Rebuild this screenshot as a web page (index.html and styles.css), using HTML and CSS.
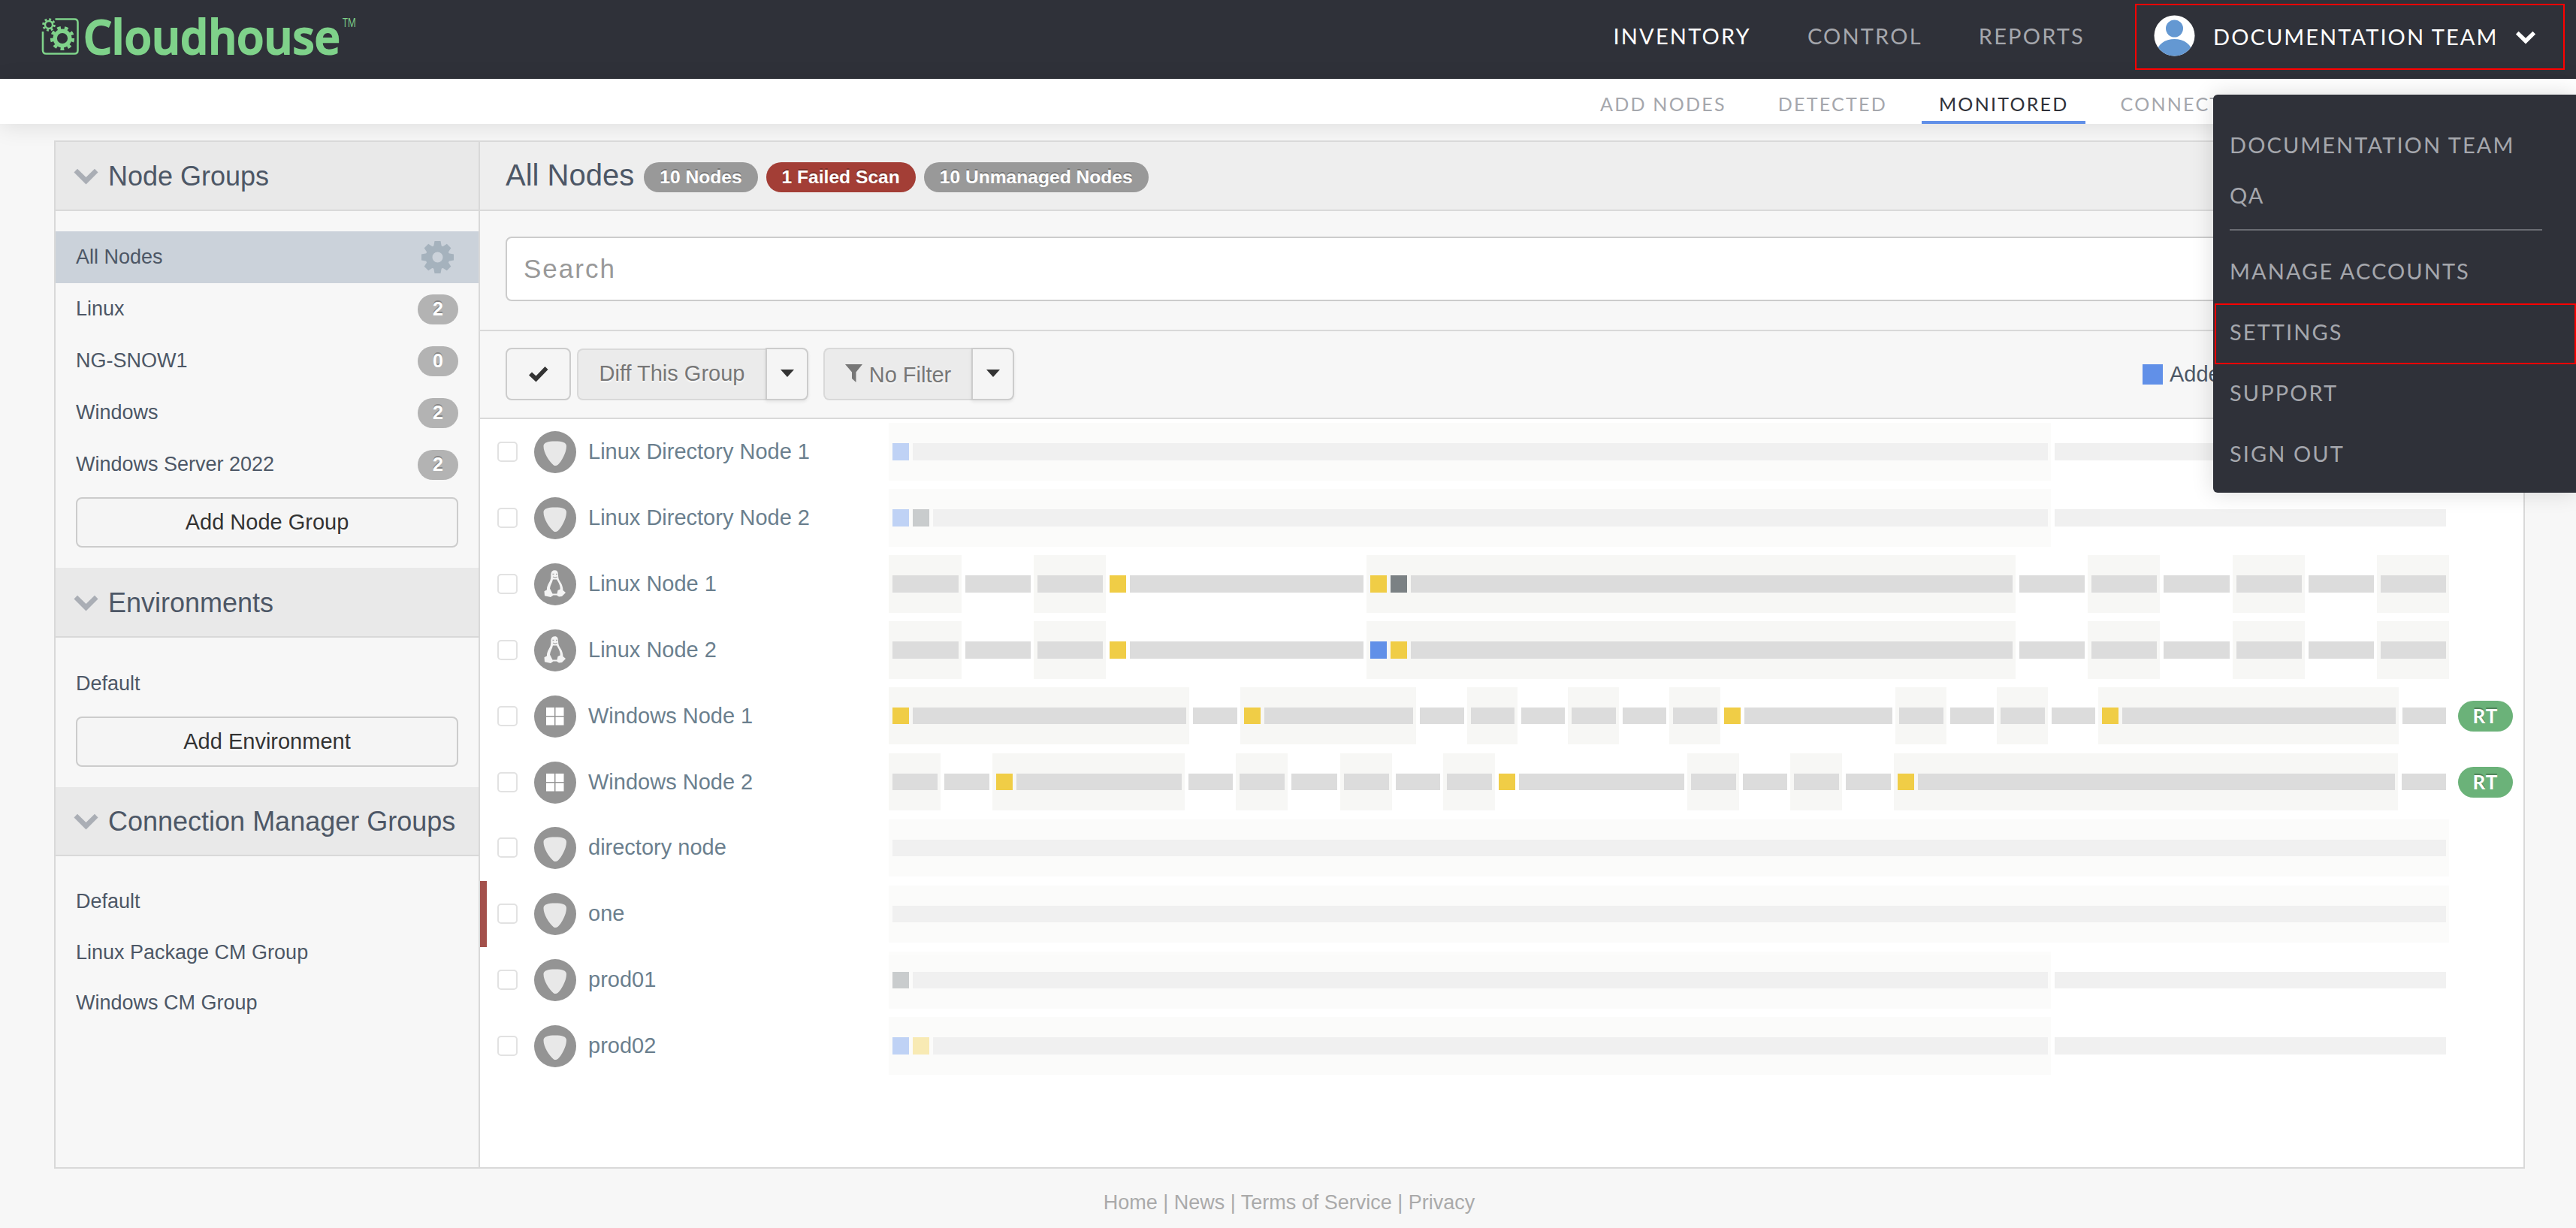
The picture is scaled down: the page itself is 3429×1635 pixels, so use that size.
FILE: index.html
```html
<!DOCTYPE html>
<html lang="en">
<head>
<meta charset="utf-8">
<title>Cloudhouse - Monitored Nodes</title>
<link rel="stylesheet" href="styles.css">
</head>
<body>
<svg class="defs" aria-hidden="true">
  <symbol id="chevron" viewBox="0 0 33 22"><path d="M0.5 5.500 5 .8 16.500 12 28 .8 32.500 5.500 16.500 21.500z"/></symbol>
  <symbol id="directory" viewBox="0 0 56 56"><circle cx="28" cy="28" r="28" fill="#949494"/><path d="M12.500 20c0-5 6-6.500 15.500-6.500S43 15 43 20c0 9-7 21-11 24.500-2.500 2-5 2-7 0C20 40 12.500 29 12.500 20z" fill="#e8e8e8"/></symbol>
  <symbol id="linux" viewBox="0 0 56 56"><circle cx="28" cy="28" r="28" fill="#949494"/><path d="M27.500 9.300c-4 0-5.300 3-5.200 7 .2 4.500-1 7-3 10.500-1.700 3-2.600 6-2.300 8.500l-3.500 2 .5 6 8 1.700 3.500-2.500h4.500l3 2 4-.5 5-5-3.500-3c-.2-4-1.200-7.500-3.200-10.500-2.400-3.600-3.300-6-3.300-9.700 0-4-1-6.500-4.500-6.500z" fill="#f4f4f4"/><path d="M25 21.500h5c2.500 4 5 8 4.700 13l-3.200 1.500-1 4.500h-6l-3.500-7c.5-4.500 3-7.500 4-12z" fill="#949494"/><path d="M24.500 14.500h2M29 14.500h2M25 18l3 1 3-1" stroke="#aaa" stroke-width="1.300" fill="none"/></symbol>
  <symbol id="windows" viewBox="0 0 56 56"><circle cx="28" cy="28" r="28" fill="#949494"/><path d="M16 16h11v11H16zM28.500 16h11v11h-11zM16 28.500h11v11H16zM28.500 28.500h11v11h-11z" fill="#fff"/></symbol>
</svg>

<header class="topbar">
  <svg class="logo" width="424" height="64" viewBox="0 0 424 64">
    <g fill="none" stroke="#7fd28a">
      <path d="M17.500 1.500H43q4.500 0 4.500 4.500v37q0 4.500-4.500 4.500H5.500q-4.500 0-4.500-4.500V18" stroke-width="2.600"/>
      <circle cx="9" cy="9" r="5" stroke-width="2.400"/>
      <circle cx="9" cy="9" r="7.300" stroke-width="3" stroke-dasharray="2.800 2.933"/>
      <circle cx="27" cy="27" r="9.800" stroke-width="5.400"/>
      <circle cx="27" cy="27" r="14" stroke-width="4.200" stroke-dasharray="4.800 4.974"/>
    </g>
    <g fill="#7fd28a">
      <text class="logo-name" x="55" y="48" textLength="342" lengthAdjust="spacingAndGlyphs">Cloudhouse</text>
      <text class="logo-tm" x="400" y="11.500" textLength="18" lengthAdjust="spacingAndGlyphs">TM</text>
    </g>
  </svg>
  <nav class="main-nav">
    <a class="active">INVENTORY</a><a>CONTROL</a><a>REPORTS</a>
  </nav>
  <div class="account">
    <svg width="55" height="55" viewBox="0 0 55 55"><clipPath id="av"><circle cx="27.500" cy="27.500" r="27"/></clipPath><g clip-path="url(#av)"><path fill="#fff" d="M0 0h55v55H0z"/><circle cx="27.500" cy="18" r="11.500" fill="#6498d2"/><ellipse cx="27.500" cy="49" rx="23" ry="17" fill="#6498d2"/></g></svg>
    <span>DOCUMENTATION TEAM</span>
    <svg class="account-chevron" width="28" height="18"><use href="#chevron"/></svg>
  </div>
</header>

<nav class="sub-nav">
  <a>ADD NODES</a><a>DETECTED</a><a class="active">MONITORED</a><a>CONNECTION MANAGERS</a>
</nav>

<div class="menu">
  <a class="account-name">DOCUMENTATION TEAM</a>
  <a class="account-name">QA</a>
  <hr>
  <a>MANAGE ACCOUNTS</a>
  <a class="marked">SETTINGS</a>
  <a>SUPPORT</a>
  <a>SIGN OUT</a>
</div>

<div class="panel">
  <aside class="sidebar">
    <h2><svg width="33" height="22"><use href="#chevron"/></svg>Node Groups</h2>
    <ul class="groups">
      <li class="selected">All Nodes
        <svg width="43" height="43" viewBox="0 0 43 43"><circle cx="21.500" cy="21.500" r="11.500" fill="none" stroke="#a5b2bd" stroke-width="9"/><path d="M17.500 0h8l1.500 8h-11zM17.500 43h8l1.500-8h-11zM0 17.500v8l8 1.500V16zM43 17.500v8L35 27V16zM3.700 9.200l5.500-5.500 7 4.500-8 8zM39.300 9.200l-5.500-5.500-7 4.500 8 8zM3.700 33.800l5.500 5.500 7-4.500-8-8zM39.300 33.800l-5.500 5.500-7-4.500 8-8z" fill="#a5b2bd"/></svg>
      </li>
      <li>Linux<b>2</b></li>
      <li>NG-SNOW1<b>0</b></li>
      <li>Windows<b>2</b></li>
      <li>Windows Server 2022<b>2</b></li>
    </ul>
    <button class="wide">Add Node Group</button>
    <h2 class="environments"><svg width="33" height="22"><use href="#chevron"/></svg>Environments</h2>
    <ul><li>Default</li></ul>
    <button class="wide">Add Environment</button>
    <h2><svg width="33" height="22"><use href="#chevron"/></svg>Connection Manager Groups</h2>
    <ul class="managers"><li>Default</li><li>Linux Package CM Group</li><li>Windows CM Group</li></ul>
  </aside>

  <main class="content">
    <div class="title">
      <h1>All Nodes</h1>
      <b>10 Nodes</b><b class="failed">1 Failed Scan</b><b>10 Unmanaged Nodes</b>
    </div>
    <div class="search"><input type="text" placeholder="Search"></div>
    <div class="toolbar">
      <button class="check"><svg width="26" height="21" viewBox="0 0 26 21"><path d="M0 11.500 4 7.500 9.500 12.500 21.500 0 25.500 4 9.500 20.500z" fill="#333"/></svg></button>
      <span class="split diff"><button class="main">Diff This Group</button><button class="caret"><i></i></button></span>
      <span class="split filter"><button class="main"><svg width="23" height="24" viewBox="0 0 23 24"><path d="M0 0h23L14.500 10.500V24L9 19V10.500z" fill="#777"/></svg>No Filter</button><button class="caret"><i></i></button></span>
      <span class="legend"><i></i>Added</span>
    </div>

    <div class="nodes">
      <div class="node"><input type="checkbox"><svg class="os"><use href="#directory"/></svg><a>Linux Directory Node 1</a>
        <div class="timeline faded"><div style="width:1547px"><i class="added"></i><i></i></div><div style="width:530px"><i></i></div></div></div>
      <div class="node"><input type="checkbox"><svg class="os"><use href="#directory"/></svg><a>Linux Directory Node 2</a>
        <div class="timeline faded"><div style="width:1547px"><i class="added"></i><i class="removed"></i><i></i></div><div style="width:530px"><i></i></div></div></div>
      <div class="node"><input type="checkbox"><svg class="os"><use href="#linux"/></svg><a>Linux Node 1</a>
        <div class="timeline"><div style="width:97px"><i></i></div><div style="width:96px"><i></i></div><div style="width:96px"><i></i></div><div style="width:347px"><i class="changed"></i><i></i></div><div style="width:864px"><i class="changed"></i><i class="removed"></i><i></i></div><div style="width:96px"><i></i></div><div style="width:96px"><i></i></div><div style="width:97px"><i></i></div><div style="width:96px"><i></i></div><div style="width:96px"><i></i></div><div style="width:96px"><i></i></div></div></div>
      <div class="node"><input type="checkbox"><svg class="os"><use href="#linux"/></svg><a>Linux Node 2</a>
        <div class="timeline"><div style="width:97px"><i></i></div><div style="width:96px"><i></i></div><div style="width:96px"><i></i></div><div style="width:347px"><i class="changed"></i><i></i></div><div style="width:864px"><i class="added"></i><i class="changed"></i><i></i></div><div style="width:96px"><i></i></div><div style="width:96px"><i></i></div><div style="width:97px"><i></i></div><div style="width:96px"><i></i></div><div style="width:96px"><i></i></div><div style="width:96px"><i></i></div></div></div>
      <div class="node"><input type="checkbox"><svg class="os"><use href="#windows"/></svg><a>Windows Node 1</a>
        <div class="timeline"><div style="width:400px"><i class="changed"></i><i></i></div><div style="width:68px"><i></i></div><div style="width:234px"><i class="changed"></i><i></i></div><div style="width:68px"><i></i></div><div style="width:67px"><i></i></div><div style="width:67px"><i></i></div><div style="width:68px"><i></i></div><div style="width:67px"><i></i></div><div style="width:68px"><i></i></div><div style="width:233px"><i class="changed"></i><i></i></div><div style="width:68px"><i></i></div><div style="width:67px"><i></i></div><div style="width:68px"><i></i></div><div style="width:67px"><i></i></div><div style="width:400px"><i class="changed"></i><i></i></div><div style="width:67px"><i></i></div></div><b>RT</b></div>
      <div class="node"><input type="checkbox"><svg class="os"><use href="#windows"/></svg><a>Windows Node 2</a>
        <div class="timeline"><div style="width:69px"><i></i></div><div style="width:69px"><i></i></div><div style="width:256px"><i class="changed"></i><i></i></div><div style="width:68px"><i></i></div><div style="width:69px"><i></i></div><div style="width:70px"><i></i></div><div style="width:69px"><i></i></div><div style="width:68px"><i></i></div><div style="width:69px"><i></i></div><div style="width:256px"><i class="changed"></i><i></i></div><div style="width:69px"><i></i></div><div style="width:68px"><i></i></div><div style="width:69px"><i></i></div><div style="width:69px"><i></i></div><div style="width:671px"><i class="changed"></i><i></i></div><div style="width:68px"><i></i></div></div><b>RT</b></div>
      <div class="node"><input type="checkbox"><svg class="os"><use href="#directory"/></svg><a>directory node</a>
        <div class="timeline faded"><div style="width:2077px"><i></i></div></div></div>
      <div class="node failing"><input type="checkbox"><svg class="os"><use href="#directory"/></svg><a>one</a>
        <div class="timeline faded"><div style="width:2077px"><i></i></div></div></div>
      <div class="node"><input type="checkbox"><svg class="os"><use href="#directory"/></svg><a>prod01</a>
        <div class="timeline faded"><div style="width:1547px"><i class="removed"></i><i></i></div><div style="width:530px"><i></i></div></div></div>
      <div class="node"><input type="checkbox"><svg class="os"><use href="#directory"/></svg><a>prod02</a>
        <div class="timeline faded"><div style="width:1547px"><i class="added"></i><i class="changed"></i><i></i></div><div style="width:530px"><i></i></div></div></div>
    </div>
  </main>
</div>

<footer><a>Home</a> | <a>News</a> | <a>Terms of Service</a> | <a>Privacy</a></footer>
</body>
</html>
```
FILE: styles.css
```css
* { box-sizing: border-box; }
body { margin: 0; width: 3429px; height: 1635px; overflow: hidden; position: relative; background: #f7f7f7; color: #4d5766; font: 27px "Liberation Sans", Arial, sans-serif; white-space: nowrap; }
h1, h2, ul { margin: 0; padding: 0; font-weight: normal; list-style: none; }
button { font: 29px/1 "Liberation Sans", Arial, sans-serif; color: #333; background: #f5f5f5; border: 2px solid #ccc; border-radius: 8px; padding: 0; text-shadow: 0 2px 2px rgba(255,255,255,.75); }
svg { display: block; flex: none; }
.defs { position: absolute; width: 0; height: 0; }

.topbar { height: 105px; background: #2f3139; display: flex; padding: 0 15px 0 56px; font: 29px/1 Lato, sans-serif; }
.logo { margin-top: 24px; overflow: visible; }
.logo-name { font: 600 64px "Open Sans", sans-serif; stroke: #7fd28a; stroke-width: 2.200px; }
.logo-tm { font: 16px "Open Sans", sans-serif; }
.main-nav { margin-left: auto; display: flex; gap: 75px; padding-top: 33px; margin-right: 67px; }
.main-nav a { color: #a5a7ad; letter-spacing: 2.200px; }
.main-nav .active { color: #fff; }
.account { width: 572px; height: 88px; margin-top: 5px; border: 2px solid #f00; display: flex; align-items: center; padding: 0 0 3px 23px; color: #fff; letter-spacing: 2.080px; }
.account span { margin-left: 24px; padding-top: 2px; }
.account-chevron { margin-left: 22px; fill: #fff; margin-top: 4px; }

.sub-nav { height: 60px; background: #fff; display: flex; padding-left: 2107px; gap: 24px; font: 25px/1 Lato, sans-serif; box-shadow: 0 4px 30px rgba(0,0,0,.1); color: #a5a7ad; letter-spacing: 2.250px; }
.sub-nav a { padding: 21px 22px 0 23px; border-bottom: 4px solid transparent; }
.sub-nav .active { color: #2f3139; border-color: #6190e8; }

.menu { position: absolute; z-index: 2; left: 2946px; top: 126px; width: 483px; height: 530px; background: #2f3139; border-radius: 6px 0 0 6px; box-shadow: 0 0 30px rgba(0,0,0,.14); padding-top: 34px; font: 29px/1 Lato, sans-serif; letter-spacing: 2.080px; color: #a5a7ad; }
.menu a { display: flex; align-items: center; height: 81px; padding: 0 0 6px 22px; }
.menu .account-name { height: 67.500px; padding-bottom: 3px; }
.menu .marked { border: 2px solid #f00; margin-left: 2px; padding-left: 18px; }
.menu hr { border: 0; height: 2px; background: #696b72; margin: 10px 45px 16px 22px; }

.panel { margin: 22px 0 0 72px; width: 3289px; height: 1369px; border: 2px solid #d9d9d9; display: flex; position: relative; }
.sidebar { width: 565px; flex: none; border-right: 2px solid #d9d9d9; background: #f7f7f7; }
.sidebar h2 { height: 92px; background: #e9e9e9; border-bottom: 2px solid #d9d9d9; display: flex; align-items: center; padding: 1px 0 0 24px; gap: 13px; font-size: 36px; line-height: 1; }
.sidebar h2.environments { height: 93px; padding-top: 2px; }
.sidebar h2 svg { fill: #aaaeb5; }
.sidebar ul { padding: 27px 0 9px; }
.sidebar li { height: 69px; display: flex; align-items: center; justify-content: space-between; padding: 0 27px 0 27px; }
.sidebar .managers li { height: 67.500px; }
.sidebar .selected { background: #cbd2da; padding: 0 33px 0 27px; }
.sidebar li b { width: 54px; height: 40px; margin-top: 1px; border-radius: 20px; background: #b3b3b3; color: #fff; font-size: 25px; line-height: 39px; text-align: center; text-shadow: 0 -2px 0 rgba(0,0,0,.25); }
.wide { display: block; width: 509px; height: 67px; margin: 0 0 27px 27px; }

.content { flex: 1; background: #fff; display: flex; flex-direction: column; }
.title { height: 92px; flex: none; background: #eee; border-bottom: 2px solid #d9d9d9; padding-left: 34px; display: flex; align-items: center; gap: 11px; }
.title h1 { font-size: 40px; line-height: 1; padding-bottom: 2px; margin-right: 2px; }
.title b { height: 40px; padding: 0 21px; margin-top: 4px; border-radius: 20px; background: #999; color: #fff; font-size: 24.600px; line-height: 39px; text-shadow: 0 -2px 0 rgba(0,0,0,.25); }
.title .failed { background: #a33e36; }
.search { height: 160px; flex: none; background: #f7f7f7; border-bottom: 2px solid #d9d9d9; padding: 34px 28px 0 34px; }
.search input { display: block; width: 100%; height: 86px; border: 2px solid #ccc; border-radius: 8px; padding: 0 22px; font: 35px "Liberation Sans", Arial, sans-serif; letter-spacing: 2px; background: #fff; }
.search input::placeholder { color: #999; opacity: 1; }
.toolbar { height: 117px; flex: none; background: #f7f7f7; border-bottom: 2px solid #d9d9d9; padding: 22px 28px 0 34px; display: flex; color: #4d5766; font-size: 29px; }
.check { width: 87px; height: 70px; display: flex; align-items: center; justify-content: center; }
.split { display: flex; height: 70px; align-items: flex-end; }
.split .main { width: 251px; height: 69px; color: #777; background: #ebebeb; border-color: #d9d9d9; border-right: 0; border-radius: 8px 0 0 8px; padding-bottom: 3px; }
.split .caret { width: 57px; height: 70px; border-radius: 0 8px 8px 0; display: flex; align-items: center; justify-content: center; box-shadow: 0 2px 4px rgba(0,0,0,.08); }
.caret i { border: 9px solid transparent; border-top: 10px solid #333; border-bottom: 0; margin-bottom: 2px; }
.diff { margin: 0 20px 0 8px; }
.split.filter .main { width: 197px; height: 70px; display: flex; align-items: center; justify-content: center; gap: 9px; padding: 2px 0 0; }
.filter .main svg { margin-bottom: 4px; }
.legend { margin-left: 1502px; height: 70px; display: flex; align-items: center; gap: 9px; }
.legend i { width: 27px; height: 27px; background: #6190e8; }

.node { height: 87.930px; display: flex; align-items: center; position: relative; padding-left: 23px; }
.node.failing::before { content: ""; position: absolute; left: 0; top: 0; width: 9px; height: 100%; background: #a3504b; }
.node input { appearance: none; width: 27px; height: 27px; margin: 0 0 1px; border: 2px solid #e2e2e2; border-radius: 5px; background: #fff; }
.os { width: 56px; height: 56px; margin-left: 22px; }
.node a { width: 416px; padding: 1px 0 2px 16px; font-size: 29px; line-height: 1; color: #6b7f8e; }
.timeline { display: flex; height: 76.600px; width: 2077px; flex: none; margin-bottom: 1px; }
.timeline.faded { opacity: .4; }
.timeline div { flex: none; display: flex; align-items: center; gap: 5px; padding: 0 4px 0 5px; }
.timeline div:nth-child(odd) { background: #f7f7f5; }
.timeline i { height: 22.600px; flex: 1; background: #dcdcdc; }
.timeline .added, .timeline .changed, .timeline .removed { flex: 0 0 22px; }
.timeline .added { background: #6190e8; }
.timeline .changed { background: #f0cd46; }
.timeline .removed { background: #7b8184; }
.node b { width: 73px; height: 41px; margin-left: 12px; border-radius: 20.500px; background: #6bb279; color: #fff; font: bold 26px/41px Lato, sans-serif; letter-spacing: 1px; text-align: center; text-shadow: 0 -2px 0 rgba(0,0,0,.25); }

footer { padding: 31px 0 0 3px; text-align: center; color: #aaa; line-height: 29px; }
```
